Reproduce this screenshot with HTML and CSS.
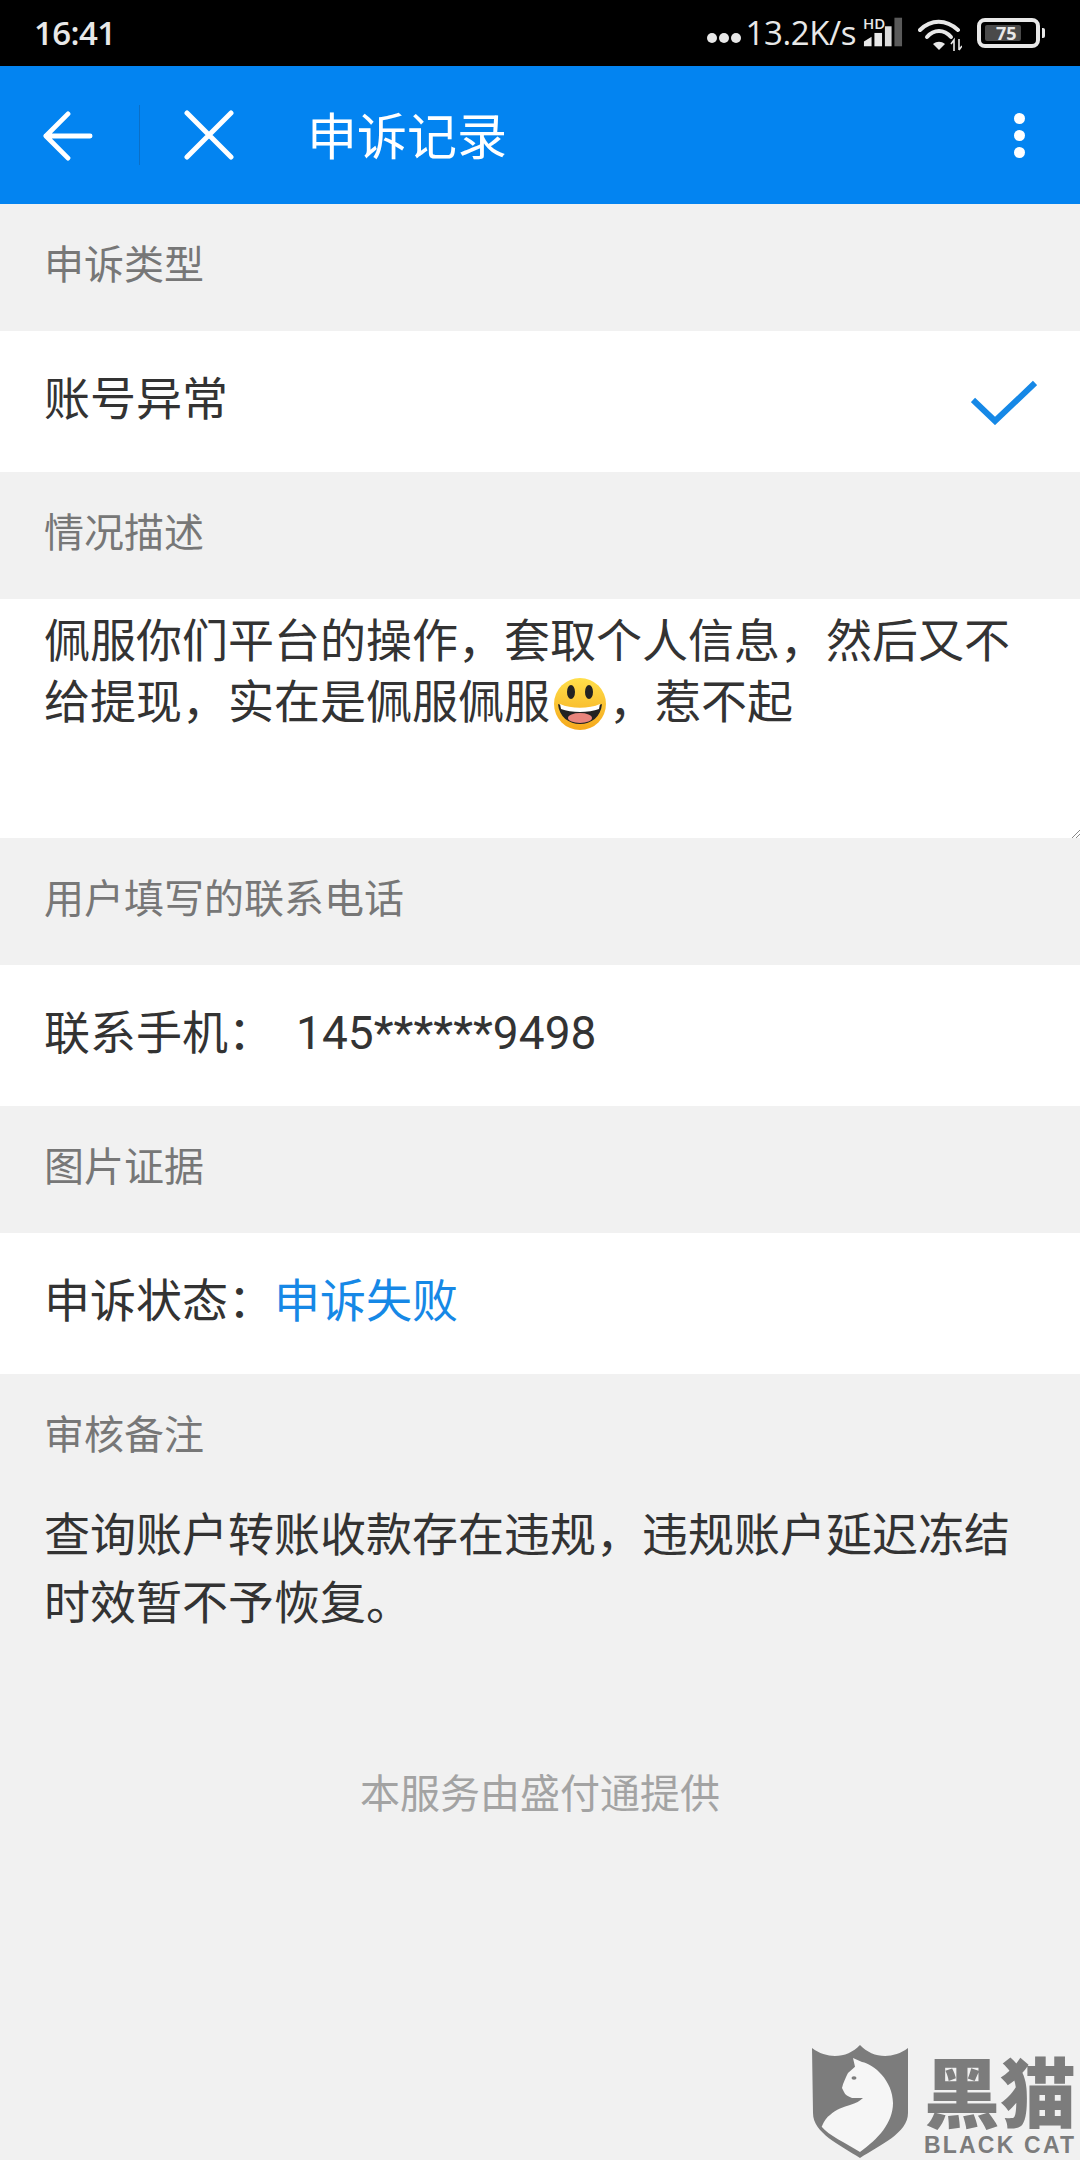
FILE: index.html
```html
<!DOCTYPE html>
<html lang="zh-CN">
<head>
<meta charset="utf-8">
<title>申诉记录</title>
<link rel="stylesheet" href="styles.css">
</head>
<body>
<div class="page">
  <header class="status">
    <span class="time">16:41</span>
    <div class="status-right">
      <svg class="more-dots" width="36" height="12" viewBox="0 0 36 12"><circle cx="6" cy="6" r="5" fill="#e8e8e8"/><circle cx="18" cy="6" r="5" fill="#e8e8e8"/><circle cx="30" cy="6" r="5" fill="#e8e8e8"/></svg>
      <span class="speed">13.2K/s</span>
      <div class="signal">
        <span class="hd">HD</span>
        <svg width="40" height="30" viewBox="0 0 42 30"><path d="M1 30V25L9 20V30Z" fill="#e8e8e8"/><rect x="12" y="16" width="8" height="14" fill="#e8e8e8"/><rect x="23" y="9" width="7" height="21" fill="#e8e8e8" opacity=".95"/><rect x="33" y="0" width="8" height="30" fill="#5a5a5a"/></svg>
      </div>
      <svg class="wifi" width="44" height="32" viewBox="0 0 44 32" fill="none" stroke="#e8e8e8" stroke-width="4" stroke-linecap="round"><path d="M2 11C13 0 28 0 40 11"/><path d="M9 18C16 10 26 10 33 18"/><path d="M15 25L21 31L27 25C23 22 19 22 15 25Z" fill="#e8e8e8" stroke="none"/><path d="M36 32V22M33 25L36 21V32M41 20V31M41 31L44 27" stroke-width="1.6" stroke-linecap="butt"/></svg>
      <div class="battery"><div class="battery-body"><div class="battery-fill"></div><span class="battery-num">75</span></div><span class="battery-tip"></span></div>
    </div>
  </header>
  <nav class="navbar">
    <svg class="nav-back" width="50" height="50" viewBox="0 0 52 52" fill="none" stroke="#fff" stroke-width="5" stroke-linecap="round" stroke-linejoin="round"><path d="M3 26H49M26 3L3 26L26 49"/></svg>
    <span class="nav-divider"></span>
    <svg class="nav-close" width="50" height="50" viewBox="0 0 50 50" fill="none" stroke="#fff" stroke-width="5" stroke-linecap="round"><path d="M3 3L47 47M47 3L3 47"/></svg>
    <h1 class="nav-title">申诉记录</h1>
    <div class="nav-more"><span></span><span></span><span></span></div>
  </nav>
  <main class="content">
    <div class="label">申诉类型</div>
    <div class="row row-between">
      <span>账号异常</span>
      <svg class="check" width="66" height="46" viewBox="0 0 66 46" fill="none" stroke="#1688e6" stroke-width="6"><path d="M2 21L24 42L64 4"/></svg>
    </div>
    <div class="label">情况描述</div>
    <div class="textarea">
      <p>佩服你们平台的操作，套取个人信息，然后又不给提现，实在是佩服佩服<svg class="emoji" width="54" height="54" viewBox="0 0 54 54"><defs><linearGradient id="face" x1="0" y1="0" x2="0" y2="1"><stop offset="0" stop-color="#ffdf4a"/><stop offset="1" stop-color="#f5a81c"/></linearGradient></defs><circle cx="27" cy="27" r="26" fill="url(#face)"/><ellipse cx="18" cy="15" rx="4" ry="7" fill="#222"/><ellipse cx="36" cy="15" rx="4" ry="7" fill="#222"/><path d="M5 27C18 33 36 33 49 27C48 40 38 47 27 47C16 47 6 40 5 27Z" fill="#222"/><path d="M7 27C18 32 36 32 47 27L46 32C36 36 18 36 8 32Z" fill="#fff"/><ellipse cx="27" cy="41" rx="12" ry="5" fill="#e8847c"/></svg>，惹不起</p>
      <svg class="resize" width="8" height="8" viewBox="0 0 8 8" stroke="#888" stroke-width="1"><path d="M0 8L8 0M4 8L8 4"/></svg>
    </div>
    <div class="label">用户填写的联系电话</div>
    <div class="row"><span>联系手机：</span><span class="phone">145******9498</span></div>
    <div class="label">图片证据</div>
    <div class="row"><span>申诉状态：</span><span class="state">申诉失败</span></div>
    <div class="label label-tight">审核备注</div>
    <p class="note">查询账户转账收款存在违规，违规账户延迟冻结时效暂不予恢复。</p>
    <p class="provider">本服务由盛付通提供</p>
  </main>
  <div class="watermark">
    <svg class="shield" width="97" height="114" viewBox="0 0 97 114"><path d="M0 3C16 15 36 13 48 0C60 13 80 15 96 3V68C96 88 68 100 48 113C28 100 1 88 1 68Z" fill="#7c7c7c"/><path d="M41 13L50 17C62 19 81 36 81 58C81 78 66 94 48 107C34 98 16 90 9.700 81.700C12 76 15 72 18 70C24 64 32 62 38 60C44 58 48 56 51 53L40 53C36 51 33 50 32 47L30 43C31 38 34 32 36 28C39 25 42 23 43 21.700Z" fill="#f6f6f6"/><ellipse cx="42" cy="33" rx="2.500" ry="1.800" fill="#7c7c7c"/></svg>
    <div class="wm-text">
      <div class="wm-cn">黑猫</div>
      <div class="wm-en">BLACK CAT</div>
    </div>
  </div>
</div>
</body>
</html>
```
FILE: styles.css
```css
* { box-sizing: border-box; }
html, body { margin: 0; padding: 0; }
body { width: 1080px; height: 2160px; overflow: hidden; background: #f1f1f1; font-family: "Noto Sans CJK SC", "Noto Sans", sans-serif; color: #333; }
.page { position: relative; width: 1080px; height: 2160px; display: flex; flex-direction: column; }
.status { height: 66px; background: #000; display: flex; align-items: center; justify-content: space-between; padding: 0 35px 0 34px; color: #e8e8e8; }
.time { font-family: "Open Sans", sans-serif; font-weight: 600; font-size: 33px; letter-spacing: -.6px; line-height: 66px; }
.status-right { display: flex; align-items: center; }
.more-dots { margin-top: 10px; }
.speed { font-family: "Open Sans", sans-serif; font-size: 33px; font-weight: 500; line-height: 64px; margin-left: 3px; letter-spacing: -.4px; }
.signal { position: relative; width: 40px; height: 66px; margin-left: 7px; display: flex; align-items: flex-end; padding-bottom: 19px; }
.hd { position: absolute; left: 0; top: 15px; font-family: "Open Sans", sans-serif; font-size: 15px; line-height: 16px; font-weight: 600; }
.wifi { margin-left: 15px; margin-top: 4px; }
.battery { display: flex; align-items: center; margin-left: 15px; }
.battery-body { position: relative; width: 63px; height: 30px; border: 4px solid #e8e8e8; border-radius: 8px; padding: 3px 4px; }
.battery-fill { width: 36px; height: 100%; background: #4a4a4a; border-radius: 2px; }
.battery-num { position: absolute; left: 15px; top: 0; font-family: "Open Sans", sans-serif; font-size: 18px; line-height: 22px; font-weight: 700; color: #e8e8e8; }
.battery-tip { width: 3px; height: 10px; background: #e8e8e8; border-radius: 0 2px 2px 0; margin-left: 2px; }
.navbar { height: 138px; background: #0384f1; display: flex; align-items: center; padding-left: 43px; color: #fff; }
.nav-back { flex: none; margin-top: 2px; }
.nav-divider { width: 1px; height: 60px; background: #0a6fc8; margin-left: 46px; }
.nav-close { flex: none; margin-left: 44px; }
.nav-title { margin: 0 0 0 73px; padding-bottom: 4px; font-size: 50px; font-weight: 400; line-height: 60px; flex: 1; }
.nav-more { display: flex; flex-direction: column; gap: 6px; margin-right: 55px; }
.nav-more span { width: 11px; height: 11px; border-radius: 50%; background: #fff; }
.content { display: flex; flex-direction: column; flex: 1; }
.label { height: 127px; padding: 0 44px 12px; display: flex; align-items: center; font-size: 40px; color: #777; line-height: 1; }
.label-tight { height: 123px; padding-bottom: 8px; }
.row { height: 141px; background: #fff; display: flex; align-items: center; padding: 0 44px 14px; font-size: 46px; line-height: 1; color: #333; }
.row-between { justify-content: space-between; padding: 0 43px 0 44px; }
.row-between span { padding-bottom: 14px; }
.phone { margin-left: 22px; margin-top: 8px; font-family: "Roboto", sans-serif; letter-spacing: .05px; }
.state { color: #1688e6; }
.textarea { position: relative; height: 239px; background: #fff; padding: 8px 44px 0; font-size: 46px; line-height: 61px; color: #333; }
.textarea p { margin: 0; }
.emoji { vertical-align: -13px; margin: 0 2px 0 3px; }
.resize { position: absolute; right: 0; bottom: 0; }
.note { margin: 0; padding: 0 44px; font-size: 46px; line-height: 68px; color: #333; }
.provider { margin: 130px 0 0; text-align: center; font-size: 40px; line-height: 56px; color: #a3a3a3; }
.watermark { position: absolute; left: 812px; top: 2045px; display: flex; gap: 15px; }
.shield { flex: none; }
.wm-text { display: flex; flex-direction: column; color: #7c7c7c; }
.wm-cn { font-size: 76px; font-weight: 900; line-height: 88px; white-space: nowrap; }
.wm-en { font-family: "Liberation Sans", sans-serif; font-size: 23px; font-weight: 700; line-height: 24px; letter-spacing: 2.2px; white-space: nowrap; }
```
